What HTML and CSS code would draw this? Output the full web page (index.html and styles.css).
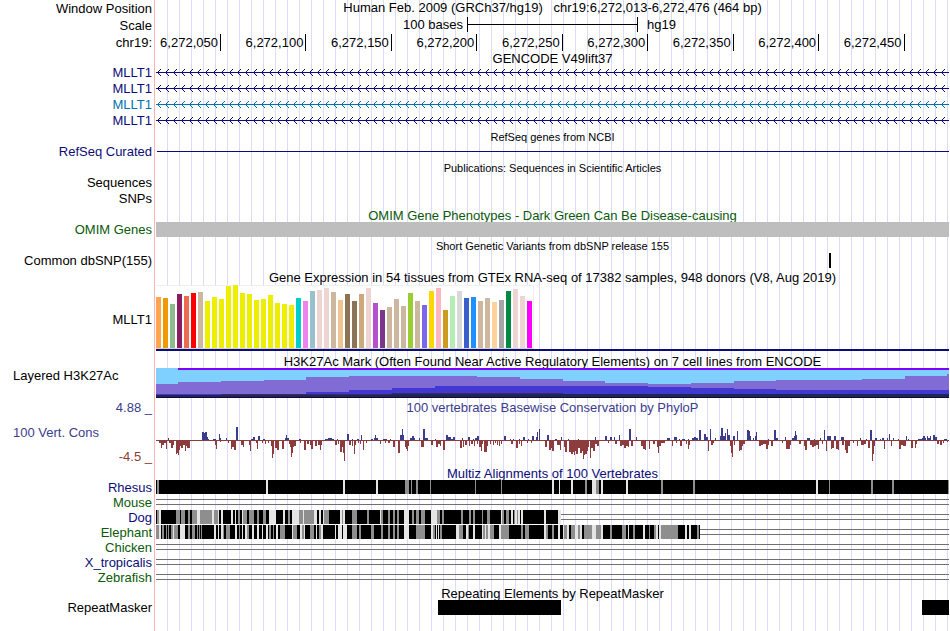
FILE: index.html
```html
<!DOCTYPE html>
<html lang="en">
<head>
    <meta charset="UTF-8">
    <meta name="viewport" content="width=device-width, initial-scale=1.0">
    <title>Human chr19:6,272,013-6,272,476</title>
    <link rel="stylesheet" href="styles.css">
</head>
<body>
    <main class="browser">
        <!-- Position and ruler -->
        <div class="row ruler-row">
            <div class="label">Window Position</div>
            <h1 class="plot title">Human Feb. 2009 (GRCh37/hg19) &nbsp; chr19:6,272,013-6,272,476 (464 bp)</h1>
        </div>
        <div class="row ruler-row">
            <div class="label">Scale</div>
            <div class="plot scale">
                <span class="scale-size">100 bases</span>
                <span class="scale-bar"></span>
                <span class="scale-db">hg19</span>
            </div>
        </div>
        <div class="row ruler-row">
            <div class="label">chr19:</div>
            <div class="plot ruler">
                <span class="tick">6,272,050</span>
                <span class="tick">6,272,100</span>
                <span class="tick">6,272,150</span>
                <span class="tick">6,272,200</span>
                <span class="tick">6,272,250</span>
                <span class="tick">6,272,300</span>
                <span class="tick">6,272,350</span>
                <span class="tick">6,272,400</span>
                <span class="tick">6,272,450</span>
            </div>
        </div>

        <!-- Genes -->
        <h2 class="title tight">GENCODE V49lift37</h2>
        <div class="row gene navy">
            <div class="label">MLLT1</div>
            <div class="plot"><svg class="intron"></svg></div>
        </div>
        <div class="row gene navy">
            <div class="label">MLLT1</div>
            <div class="plot"><svg class="intron"></svg></div>
        </div>
        <div class="row gene blue">
            <div class="label">MLLT1</div>
            <div class="plot"><svg class="intron"></svg></div>
        </div>
        <div class="row gene navy">
            <div class="label">MLLT1</div>
            <div class="plot"><svg class="intron"></svg></div>
        </div>
        <h2 class="title small">RefSeq genes from NCBI</h2>
        <div class="row navy">
            <div class="label">RefSeq Curated</div>
            <div class="plot"><div class="refseq"></div></div>
        </div>

        <h2 class="title small">Publications: Sequences in Scientific Articles</h2>
        <div class="row">
            <div class="label">Sequences</div>
        </div>
        <div class="row">
            <div class="label">SNPs</div>
        </div>

        <h2 class="title green">OMIM Gene Phenotypes - Dark Green Can Be Disease-causing</h2>
        <div class="row green">
            <div class="label">OMIM Genes</div>
            <div class="plot"><div class="omim"></div></div>
        </div>
        <h2 class="title small">Short Genetic Variants from dbSNP release 155</h2>
        <div class="row">
            <div class="label">Common dbSNP(155)</div>
            <div class="plot"><svg class="strip" id="dbsnp" viewBox="0 0 793 15" preserveAspectRatio="none"></svg></div>
        </div>

        <!-- Expression -->
        <h2 class="title tall">Gene Expression in 54 tissues from GTEx RNA-seq of 17382 samples, 948 donors (V8, Aug 2019)</h2>
        <div class="row gtex">
            <div class="label">MLLT1</div>
            <div class="plot">
                <svg id="gtex" viewBox="0 0 793 66" preserveAspectRatio="none"></svg>
            </div>
        </div>

        <!-- Regulation -->
        <h2 class="title tight">H3K27Ac Mark (Often Found Near Active Regulatory Elements) on 7 cell lines from ENCODE</h2>
        <div class="row h3k">
            <div class="label left">Layered H3K27Ac</div>
            <div class="plot">
                <svg id="h3k" viewBox="0 0 793 30" preserveAspectRatio="none"></svg>
            </div>
        </div>

        <!-- Conservation -->
        <div class="row phylop">
            <div class="label axis">
                <span>4.88 _</span>
                <span class="axis-name">100 Vert. Cons</span>
                <span class="minus">-4.5 _</span>
            </div>
            <div class="plot">
                <h2 class="title">100 vertebrates Basewise Conservation by PhyloP</h2>
                <svg id="phylop" viewBox="0 0 793 50" preserveAspectRatio="none"></svg>
            </div>
        </div>
        <h2 class="title navy">Multiz Alignments of 100 Vertebrates</h2>
        <div class="row species navy">
            <div class="label">Rhesus</div>
            <div class="plot"><svg class="strip" id="rhesus" viewBox="0 0 793 15" preserveAspectRatio="none"></svg></div>
        </div>
        <div class="row species green">
            <div class="label">Mouse</div>
            <div class="plot"><svg class="strip" id="mouse" viewBox="0 0 793 15" preserveAspectRatio="none"></svg></div>
        </div>
        <div class="row species navy">
            <div class="label">Dog</div>
            <div class="plot"><svg class="strip" id="dog" viewBox="0 0 793 15" preserveAspectRatio="none"></svg></div>
        </div>
        <div class="row species green">
            <div class="label">Elephant</div>
            <div class="plot"><svg class="strip" id="elephant" viewBox="0 0 793 15" preserveAspectRatio="none"></svg></div>
        </div>
        <div class="row species green">
            <div class="label">Chicken</div>
            <div class="plot"><svg class="strip" id="chicken" viewBox="0 0 793 15" preserveAspectRatio="none"></svg></div>
        </div>
        <div class="row species navy">
            <div class="label">X_tropicalis</div>
            <div class="plot"><svg class="strip" id="xenopus" viewBox="0 0 793 15" preserveAspectRatio="none"></svg></div>
        </div>
        <div class="row species green">
            <div class="label">Zebrafish</div>
            <div class="plot"><svg class="strip" id="zebrafish" viewBox="0 0 793 15" preserveAspectRatio="none"></svg></div>
        </div>

        <!-- Repeats -->
        <h2 class="title">Repeating Elements by RepeatMasker</h2>
        <div class="row">
            <div class="label">RepeatMasker</div>
            <div class="plot"><svg class="strip" id="repeats" viewBox="0 0 793 15" preserveAspectRatio="none"></svg></div>
        </div>
    </main>
    <script src="script.js"></script>
</body>
</html>
```
FILE: styles.css
```css
:root {
    --label-width: 156px;
    --navy: #0c0c78;
    --blue: #0073af;
    --green: #0a5a0a;
    --phylop: #3c3c8c;
    --phylop-minus: #8c3c3c;
    --grid: #dcdcf8;
    --edge: #ffb4b4;
}

* {
    margin: 0;
    padding: 0;
    box-sizing: border-box;
}

body {
    background-color: white;
    color: black;
    font-family: "Liberation Sans", Arial, sans-serif;
    font-size: 13px;
}

/* Red edge line and light guide lines run behind all the tracks */
.browser {
    min-height: 100vh;
    padding: 0 1px 15px 0;
    background-image:
        linear-gradient(var(--edge), var(--edge)),
        repeating-linear-gradient(to right, transparent 0 11px, var(--grid) 11px 12px);
    background-position: 154px 0, var(--label-width) 0;
    background-size: 1px 100%, 100% 100%;
    background-repeat: no-repeat;
}

.row {
    display: flex;
    height: 16px;
    line-height: 16px;
}

.ruler-row {
    height: 17px;
    line-height: 17px;
}

.label {
    flex: none;
    width: var(--label-width);
    padding-right: 4px;
    text-align: right;
}

.label.left {
    padding-left: 13px;
    text-align: left;
}

.plot {
    flex: 1;
    min-width: 0;
}

.title {
    height: 15px;
    padding-left: var(--label-width);
    font-size: 13px;
    font-weight: normal;
    line-height: 17px;
    text-align: center;
    white-space: nowrap;
}

.plot.title,
.plot .title {
    padding-left: 0;
    line-height: 15px;
}

.title.tight {
    height: 14px;
    line-height: 15px;
}

.title.tall {
    height: 16px;
}

.title.small {
    font-size: 11px;
}

.navy {
    color: var(--navy);
}

.blue {
    color: var(--blue);
}

.green {
    color: var(--green);
}

svg {
    display: block;
    width: 100%;
    shape-rendering: crispEdges;
}

/* Ruler: columns are sized in bases */
.scale,
.ruler {
    display: grid;
    height: 15px;
}

.scale {
    grid-template-columns: 182fr 100fr 182fr;
    line-height: 15px;
}

.scale-size {
    padding-right: 4px;
    text-align: right;
}

.scale-bar {
    border: solid black;
    border-width: 0 1px;
    background: linear-gradient(black, black) 0 7px / 100% 1px no-repeat;
}

.scale-db {
    padding-left: 9px;
}

.ruler {
    grid-template-columns: 38fr repeat(8, 50fr) 26fr;
}

.tick {
    padding-right: 2px;
    border-right: 1px solid black;
    text-align: right;
}

/* Tracks */
.intron {
    height: 15px;
}

.refseq {
    height: 8px;
    margin-left: 1px;
    border-bottom: 1px solid var(--navy);
}

.omim {
    height: 15px;
    background-color: #bebebe;
}

.strip {
    height: 15px;
}

.gtex {
    height: 69px;
    line-height: 69px;
}

#gtex {
    height: 66px;
}

.h3k {
    height: 32px;
}

#h3k {
    height: 30px;
}

.phylop {
    height: 65px;
    color: var(--phylop);
}

#phylop {
    height: 50px;
}

.axis {
    display: flex;
    flex-direction: column;
    justify-content: space-between;
    padding-bottom: 1px;
    line-height: 15px;
}

.axis-name {
    padding-left: 13px;
    text-align: left;
}

.minus {
    color: var(--phylop-minus);
}

.species {
    height: 15px;
    line-height: 15px;
}
```
FILE: script.js
```javascript
const SVG_NS = 'http://www.w3.org/2000/svg';
const WIDTH = 793;

function addRect(svg, x, y, width, height, fill) {
    const rect = document.createElementNS(SVG_NS, 'rect');
    rect.setAttribute('x', x);
    rect.setAttribute('y', y);
    rect.setAttribute('width', width);
    rect.setAttribute('height', height);
    rect.setAttribute('fill', fill);
    svg.appendChild(rect);
}

// Introns: a line with an arrow head every 8px
document.querySelectorAll('.intron').forEach((svg, i) => {
    svg.innerHTML = `
        <defs>
            <pattern id="arrow${i}" x="1" width="8" height="15" patternUnits="userSpaceOnUse">
                <path d="M0 7h1v1H0zM1 6h1v1H1zM1 8h1v1H1zM2 5h1v1H2zM2 9h1v1H2zM3 4h1v1H3zM3 10h1v1H3z" fill="currentColor"/>
            </pattern>
        </defs>
        <rect y="7" width="100%" height="1" fill="currentColor"/>
        <rect x="1" width="100%" height="15" fill="url(#arrow${i})"/>`;
});

// dbSNP and RepeatMasker items
addRect(document.getElementById('dbsnp'), 673, 0, 2, 15, 'black');
addRect(document.getElementById('repeats'), 282, 0, 123, 15, 'black');
addRect(document.getElementById('repeats'), 766, 0, 27, 15, 'black');

// GTEx: height and colour for each tissue
const tissues = [
    [51, '#ffa54f'], [50, '#ee9a00'], [44, '#8fbc8f'], [54, '#8b1c62'], [52, '#ee6a50'], [55, '#ff0000'],
    [56, '#cdb79e'], [47, '#eeee00'], [51, '#eeee00'], [49, '#eeee00'], [62, '#eeee00'], [63, '#eeee00'],
    [55, '#eeee00'], [54, '#eeee00'], [48, '#eeee00'], [49, '#eeee00'], [53, '#eeee00'], [45, '#eeee00'],
    [44, '#eeee00'], [43, '#eeee00'], [50, '#00cdcd'], [47, '#ee82ee'], [57, '#9ac0cd'], [58, '#eed5d2'],
    [60, '#eed5d2'], [56, '#cdb79e'], [48, '#eec591'], [54, '#8b7355'], [47, '#8b7355'], [54, '#cdaa7d'],
    [60, '#eed5d2'], [45, '#b452cd'], [38, '#7a378b'], [41, '#cdb79e'], [49, '#cdb79e'], [42, '#cdb79e'],
    [55, '#9acd32'], [47, '#cdb79e'], [43, '#7a67ee'], [57, '#ffd700'], [60, '#ffb6c1'], [38, '#cd9b1d'],
    [52, '#b4eeb4'], [57, '#d9d9d9'], [50, '#3a5fcd'], [51, '#1e90ff'], [47, '#cdb79e'], [50, '#cdb79e'],
    [46, '#ffd39b'], [48, '#a6a6a6'], [57, '#008b45'], [59, '#eed5d2'], [52, '#eed5d2'], [47, '#ff00ff']
];
const gtex = document.getElementById('gtex');
addRect(gtex, 0, 0, 378, 64, '#f0f0f0');
addRect(gtex, 0, 1, 377, 63, 'white');
addRect(gtex, 0, 63, 377, 1, '#d3d3d3');
tissues.forEach(([height, colour], i) => addRect(gtex, i * 7, 63 - height, 5, height, colour));
addRect(gtex, 0, 64, WIDTH, 2, '#0c0c78');

// H3K27Ac: stepped layers, each one a list of [x, top]
const h3k = document.getElementById('h3k');
const layers = [
    ['#80d0ff', [[0, 0]]],
    ['#806cd4', [[0, 16], [22, 14], [65, 13], [108, 12], [150, 9], [193, 8], [321, 9], [364, 11], [407, 13],
        [449, 15], [492, 16], [535, 15], [578, 13], [620, 12], [706, 11], [749, 8], [791, 6]]],
    ['#4038d0', [[0, 26], [150, 24], [193, 22], [236, 20], [279, 18], [492, 19], [535, 20], [578, 21], [620, 22]]],
    ['#40286c', [[0, 27], [65, 26], [193, 26], [236, 25], [407, 26]]],
    ['#1c2854', [[0, 27], [235, 26]]],
    ['#180838', [[0, 29]]]
];
layers.forEach(([colour, steps]) => {
    steps.forEach(([x, top], i) => {
        const end = i + 1 < steps.length ? steps[i + 1][0] : WIDTH;
        addRect(h3k, x, top, end - x, 30 - top, colour);
    });
});
addRect(h3k, 22, 0, WIDTH - 22, 2, '#8000ff');

// PhyloP: "x,width,score", zero is at y=25
const scores = `
    3,2,-2 5,1,-7 6,2,-4 8,2,-2 10,1,-8 12,1,2 13,2,-2 15,2,-7 17,1,-4 20,1,-13 21,1,-12 22,1,-14 23,1,-9 24,1,-5
    25,2,-7 27,2,-4 29,1,-10 30,1,-5 31,3,-7 46,2,8 48,1,7 49,2,8 51,1,3 52,1,1 57,3,1 59,1,-4 60,1,-8 63,1,6 64,1,2
    64,1,-1 70,1,2 72,1,-2 75,1,-8 76,2,-6 78,2,-9 80,2,13 85,2,-4 87,1,-6 93,1,-4 94,1,-10 95,2,1 97,2,3 100,1,-2
    101,1,-8 102,2,4 107,2,1 106,1,-2 109,1,-3 112,1,-2 115,1,-5 116,1,-17 117,1,-13 119,2,-7 121,2,-9 126,2,-8
    129,1,2 130,1,5 131,2,2 133,1,-3 134,1,-6 135,1,-16 136,1,-12 137,1,-6 138,2,-5 143,2,1 144,1,-2 148,2,-9
    151,2,-3 154,1,-4 155,2,-8 159,2,-5 162,2,-4 164,1,-9 165,1,-4 169,3,1 172,4,2 176,2,1 181,1,1 179,2,-4 182,1,-3
    184,2,-11 186,1,-6 187,1,-12 188,1,-20 191,2,6 193,2,-4 196,1,1 196,1,-5 198,1,-13 199,1,-4 201,2,1 202,1,-2
    204,1,-3 205,1,5 207,1,-9 210,1,-2 215,2,1 218,1,2 219,1,5 220,2,2 224,1,-2 227,4,1 229,1,-2
    224,1,-3 228,3,1 232,2,-2 234,1,1 237,2,-6 242,2,-12 244,2,5 246,1,11 247,1,5 249,1,-6 250,1,-8 251,1,-10
    252,1,-5 254,2,2 256,2,4 258,1,2 263,1,2 265,3,-6 267,2,11 269,3,2 275,2,-4 279,1,1 280,2,-6 282,2,-3 284,1,-5
    287,2,-9 290,2,5 292,3,3 295,2,1 297,2,3 304,2,-7 306,1,2 307,1,-6 309,2,-4 312,2,3 313,1,-5 315,2,-3 317,1,1
    318,1,-5 319,2,2 321,2,4 321,1,-3 323,2,-6 325,1,-10 326,1,-3 328,3,-11 331,1,-5 334,1,-3 337,1,-4 339,1,-2
    341,1,-4 343,1,-5 345,1,-3 348,2,4 354,1,1 357,1,1 355,2,-3 360,2,-7 363,1,1 363,1,-3 365,1,-5 367,2,3 371,1,-2
    372,1,1 375,1,-2 376,2,4 380,1,3 381,1,8 383,1,11 389,2,-6 391,2,5 393,2,-9 395,1,-7 396,2,-10 399,2,1
    401,3,-4 404,1,-9 405,1,3 408,1,-6 409,2,-11 412,1,1 413,2,-11 415,2,-13 417,1,-11 418,1,-14 419,1,-10 420,2,-13
    422,1,1 422,2,-7 424,2,-12 426,1,-10 427,1,-18 428,1,-14 429,2,-13 431,1,-10 432,1,-6 434,1,-17 435,2,-7 437,2,-10
    439,1,3 439,2,-3 441,2,-5 449,2,4 452,1,-2 454,2,3 458,1,3 459,2,-3 463,1,5 464,2,-5 466,2,-4 468,2,-7 470,2,-5
    472,1,-6 473,2,11 475,2,-5 480,1,3 485,2,-5 487,2,-8 489,1,-9 493,1,-8 497,2,-3 501,1,-6 502,1,-12 503,2,-5
    505,4,-2 511,3,2 516,1,-5 518,3,3 520,1,-2 523,1,1 524,2,-5 526,3,1 530,1,-3 532,1,1 532,1,-8 533,1,-4 536,2,2
    538,2,3 540,2,2 543,2,10 548,2,6 550,2,3 552,1,-10 554,1,11 555,2,-4 557,1,-2 559,1,2 564,1,4 565,2,12 567,2,4
    569,1,7 571,1,11 572,2,5 574,1,-5 575,1,-12 576,1,-16 577,2,4 578,1,-4 581,1,9 583,1,-10 584,2,-9 586,1,-5
    587,2,-3 591,2,10 593,1,9 594,1,4 597,1,2 599,1,4 600,1,8 603,2,-5 605,2,-4 607,3,-3 610,2,-8 612,1,-4 612,1,1
    615,2,-5 618,2,10 620,2,2 626,1,-2 629,1,3 630,4,-8 634,1,-4 636,2,2 638,1,4 639,1,9 640,1,5 643,2,-3 648,1,-5
    649,2,-9 651,3,2 654,2,-4 656,2,-6 658,1,1 658,2,-5 660,2,-4 662,1,-8 664,1,2 666,1,-3 668,1,10 670,1,-10
    671,4,4 675,1,-8 676,2,-7 678,2,4 680,2,-8 682,1,-9 685,3,3 686,2,-4 689,1,-9 690,2,-12 692,2,-5 697,1,-2
    701,1,-5 704,1,2 705,3,-4 708,2,-3 710,1,1 712,2,-7 714,2,10 716,1,-20 717,1,-13 718,1,-5 719,2,2 724,1,1
    726,2,2 728,1,-8 731,1,2 733,1,6 735,1,-5 737,1,2 742,1,1 743,2,-8 745,2,-4 747,3,-5 750,1,4 752,1,1 755,2,-7
    759,1,-7 760,1,-3 762,4,1 766,1,2 767,2,4 769,1,2 771,1,4 772,2,2 774,1,4 777,2,5 779,2,3 781,2,-3 784,2,-4
    787,1,-2 788,3,1 791,1,-1
`;
const phylop = document.getElementById('phylop');
addRect(phylop, 0, 25, WIDTH, 1, '#8c3c3c');
scores.trim().split(/\s+/).forEach(item => {
    const [x, width, score] = item.split(',').map(Number);
    if (score > 0) {
        addRect(phylop, x, 25 - score, width, score, '#3c3c8c');
    } else {
        addRect(phylop, x, 25, width, -score + 1, '#8c3c3c');
    }
});

// Alignments: G = partly conserved, L = weakly conserved, then start-end
const GREY = '#8e8e8e';
const LIGHT = '#e4e4e4';

function drawAlignment(id, end, marks) {
    const svg = document.getElementById(id);
    if (end < WIDTH) {
        addRect(svg, end, 4, WIDTH - end, 1, '#707070');
        addRect(svg, end, 9, WIDTH - end, 1, '#707070');
    }
    if (end > 0) {
        addRect(svg, 0, 0, end, 14, 'black');
    }
    marks.split(' ').filter(Boolean).forEach(mark => {
        const [from, to] = mark.slice(1).split('-').map(Number);
        addRect(svg, from, 0, to - from, 14, mark[0] === 'G' ? GREY : LIGHT);
    });
}

drawAlignment('rhesus', WIDTH,
    'G1-3 L110-112 L187-189 L220-222 G249-253 G255-256 G260-262 G274-275 G319-320 G345-346 L396-398 L403-404 ' +
    'L415-417 G429-431 L436-440 G440-443 L445-447 L470-472 G505-507 G537-539 L660-662 G673-674 G715-717 G736-738 G792-793');
drawAlignment('mouse', 0, '');
drawAlignment('dog', 405,
    'G1-3 L3-5 G20-24 G25-29 G32-34 G36-37 G37-41 L41-44 G44-56 L56-58 G58-62 L62-63 L65-67 L75-77 L79-80 G82-84 ' +
    'L86-87 G87-91 G93-98 G101-103 G107-110 L113-120 L127-129 G132-134 L136-143 G143-147 L147-148 G148-158 ' +
    'L158-161 L163-165 L167-168 G168-173 L184-186 G186-187 L187-189 G196-201 G211-213 L224-225 G225-227 G232-234 ' +
    'G237-239 G241-243 L248-253 G256-258 G260-263 G265-269 L275-281 G281-284 G286-288 G305-307 G313-315 G317-319 ' +
    'G326-327 G331-334 L345-346 G346-348 G350-353 L355-357 G358-359 L359-361 G361-362 L362-364 L365-367 L388-390 L402-405');
drawAlignment('elephant', 544,
    'G0-3 L3-5 G6-8 G10-11 G12-13 G15-17 L17-18 G18-22 L24-29 G32-34 G36-39 G41-42 G43-44 G45-46 L58-60 L62-63 ' +
    'L65-67 G67-68 G70-74 L79-81 G83-84 L86-87 L89-91 G91-93 L96-98 L101-103 L106-107 L110-112 G113-115 G117-118 ' +
    'L120-122 G124-129 L136-137 G137-141 L144-146 G146-148 L148-149 G154-158 L160-161 G163-165 L165-167 L179-180 ' +
    'L182-186 L187-191 G196-201 G203-205 G215-218 G225-227 G232-234 G237-239 G241-243 L248-253 G260-269 L275-277 ' +
    'G277-279 L280-281 L282-283 G284-286 L300-303 G303-307 L310-312 G312-313 L317-319 L326-327 G327-329 L329-330 ' +
    'G330-332 L332-334 G334-338 L343-345 G345-353 G365-367 G369-373 L388-390 G390-392 G396-398 L402-404 L407-408 ' +
    'G408-411 L411-413 G415-419 L419-422 G422-424 L424-426 G428-436 L436-440 G440-445 L445-447 G454-456 G466-470 ' +
    'L472-473 G477-479 L487-489 G493-494 G498-500 L500-502 L503-505 G505-522 L529-531 L533-535 G541-543');
drawAlignment('chicken', 0, '');
drawAlignment('xenopus', 0, '');
drawAlignment('zebrafish', 0, '');
```
